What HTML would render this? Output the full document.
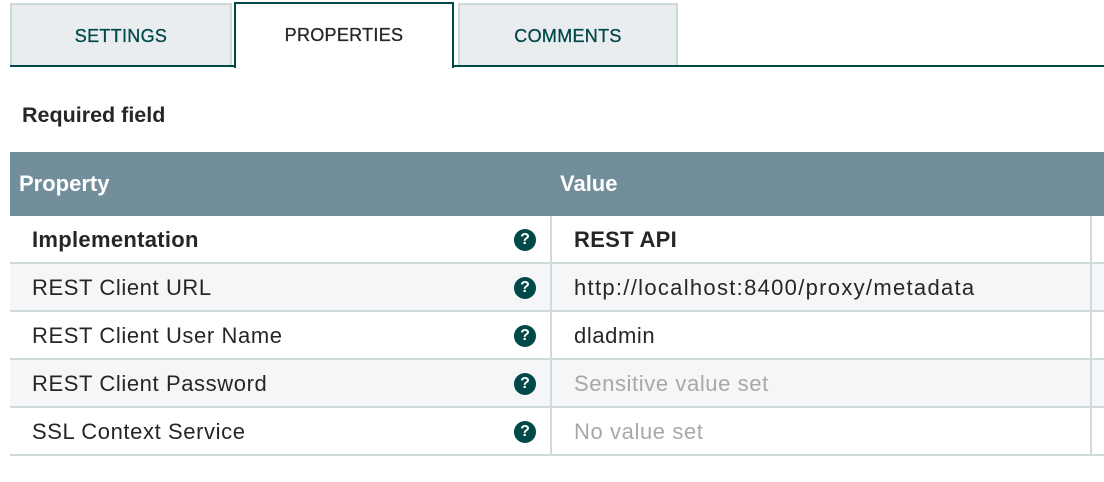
<!DOCTYPE html>
<html><head><style>
*{margin:0;padding:0;box-sizing:border-box}
body{width:1104px;height:482px;background:#fff;font-family:"Liberation Sans",sans-serif;position:relative;overflow:hidden}
.tab{position:absolute;top:3px;height:64px;background:#e9edef;border:2px solid #cdd8db;border-bottom:none;color:#004849;font-size:18px;text-align:center;line-height:62px;letter-spacing:0.3px;-webkit-text-stroke:0.3px currentColor}
.line{position:absolute;top:65px;height:2px;background:#004849}
.req{position:absolute;left:22px;top:103px;font-size:21.5px;font-weight:bold;color:#262626}
.hdr{position:absolute;left:10px;top:152px;width:1094px;height:64px;background:#728e9b;color:#fff;font-weight:bold;font-size:22px}
.hdr span{position:absolute;top:19px}
.row{position:absolute;left:10px;width:1094px;height:48px;border-bottom:2px solid #d0dadd;font-size:22px;color:#262626;letter-spacing:0.6px}
.row.alt{background:#f4f6f7}
.row .n{position:absolute;left:22px;top:11px}
.row .v{position:absolute;left:564px;top:11px}
.row b{letter-spacing:0.3px}
.row .sep{position:absolute;left:540px;top:0;width:2px;height:46px;background:#d0dadd}
.row .sep2{position:absolute;left:1080px;top:0;width:2px;height:46px;background:#d0dadd}
.q{position:absolute;left:504px;top:13px;width:22px;height:22px;border-radius:50%;background:#004849;color:#fff;font-size:16px;font-weight:bold;text-align:center;line-height:22px;letter-spacing:0}
.g{color:#a8a8a8}
</style></head><body>
<div class="tab" style="left:10px;width:222px">SETTINGS</div>
<div class="tab" style="left:234px;top:2px;width:220px;height:66px;background:#fff;border:2px solid #004849;border-bottom:none;color:#262626">PROPERTIES</div>
<div class="tab" style="left:458px;width:220px">COMMENTS</div>
<div class="line" style="left:10px;width:226px"></div>
<div class="line" style="left:452px;width:652px"></div>
<div class="req">Required field</div>
<div class="hdr"><span style="left:9px">Property</span><span style="left:550px">Value</span></div>
<div class="row" style="top:216px"><b class="n">Implementation</b><div class="q">?</div><div class="sep"></div><b class="v">REST API</b><div class="sep2"></div></div>
<div class="row alt" style="top:264px"><span class="n">REST Client URL</span><div class="q">?</div><div class="sep"></div><span class="v" style="letter-spacing:1.3px">http://localhost:8400/proxy/metadata</span><div class="sep2"></div></div>
<div class="row" style="top:312px"><span class="n">REST Client User Name</span><div class="q">?</div><div class="sep"></div><span class="v">dladmin</span><div class="sep2"></div></div>
<div class="row alt" style="top:360px"><span class="n">REST Client Password</span><div class="q">?</div><div class="sep"></div><span class="v g">Sensitive value set</span><div class="sep2"></div></div>
<div class="row" style="top:408px"><span class="n">SSL Context Service</span><div class="q">?</div><div class="sep"></div><span class="v g">No value set</span><div class="sep2"></div></div>
</body></html>
